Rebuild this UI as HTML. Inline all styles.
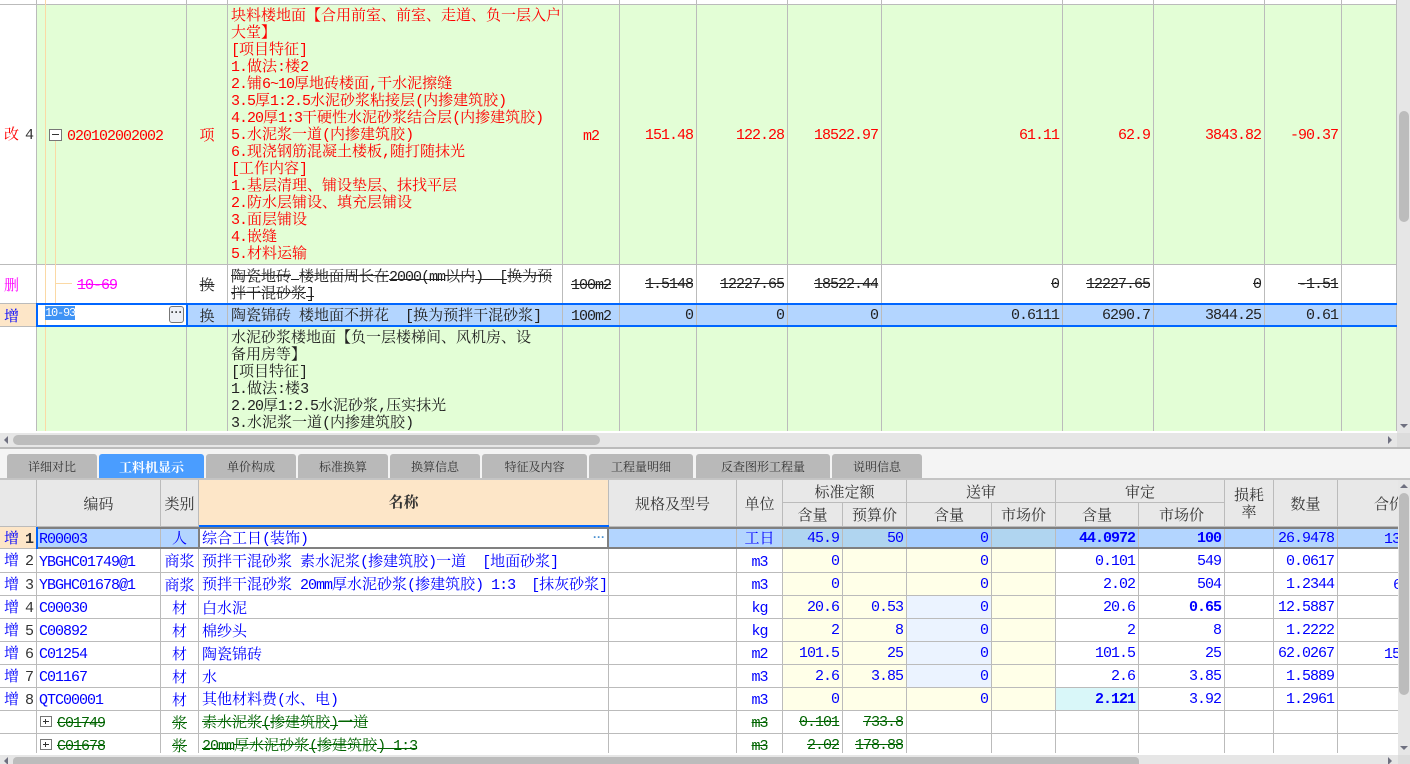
<!DOCTYPE html>
<html lang="zh">
<head>
<meta charset="utf-8">
<title>工料机显示</title>
<style>
*{box-sizing:border-box}
html,body{margin:0;padding:0;width:1410px;height:764px;overflow:hidden;background:#fff}
body{position:relative;font:15px/17px "Noto Serif CJK SC","WenQuanYi Zen Hei",serif;color:#222}
.a{position:absolute}
table{border-collapse:separate;border-spacing:0;table-layout:fixed;position:absolute;left:0}
td{border-right:1px solid #bbb;border-bottom:1px solid #bbb;padding:0 3px;white-space:nowrap;overflow:hidden;vertical-align:middle}
i,.n,.l u{font-family:"Liberation Mono",monospace;font-style:normal;font-size:15px;letter-spacing:-1px}
i{line-height:1}
.n{text-align:right;padding-top:1px}
.c{text-align:center}
.l{padding:0 0 0 4px}
.l u{text-decoration:none;margin-left:6px;color:#333}
.g{background:#e3fed6}
.s{text-decoration:line-through}
.y{background:#ffffe8}
.b{background:#ebf3ff}
.w{font-weight:bold}
#top td.d{vertical-align:top;padding:1px 0 0 3px}
.d div,.t div{height:17px}
.red td{color:#f00}
.blu td{color:#00f}
.blu td.l u{color:#333}
.grn td{color:#006400}
.tab{position:absolute;top:454px;height:24px;background:#b9b9b9;border-radius:3px 3px 0 0;text-align:center;font-size:12px;line-height:26px;color:#333}
.h{position:absolute;background:#e8e8e8;border-right:1px solid #bbb;border-bottom:1px solid #bbb;text-align:center;font-size:15px;color:#333;display:flex;align-items:center;justify-content:center;line-height:17px}
.box{position:absolute;background:#fff;border:1px solid #777}
.box:before{content:"";position:absolute;left:2px;right:2px;top:4px;height:1px;background:#333}
.box.p:after{content:"";position:absolute;top:2px;bottom:2px;left:4px;width:1px;background:#333}
</style>
</head>
<body>

<!-- upper grid -->
<div class="a" style="left:0;top:0;width:1397px;height:431px;overflow:hidden">
<table id="top" style="top:0;width:1397px">
<colgroup><col style="width:37px"><col style="width:150px"><col style="width:41px"><col style="width:335px"><col style="width:57px"><col style="width:77px"><col style="width:91px"><col style="width:94px"><col style="width:181px"><col style="width:91px"><col style="width:111px"><col style="width:77px"><col style="width:55px"></colgroup>
<tr style="height:5px"><td style="height:5px"></td><td></td><td></td><td></td><td></td><td></td><td></td><td></td><td></td><td></td><td></td><td></td><td></td></tr>
<tr class="red" style="height:260px">
<td class="l" style="height:260px">改<u>4</u></td>
<td class="g" style="padding-left:30px"><i>020102002002</i></td>
<td class="g c">项</td>
<td class="g d"><div>块料楼地面【合用前室、前室、走道、负一层入户</div><div>大堂】</div><div><i>[</i>项目特征<i>]</i></div><div><i>1.</i>做法<i>:</i>楼<i>2</i></div><div><i>2.</i>铺<i>6~10</i>厚地砖楼面<i>,</i>干水泥擦缝</div><div><i>3.5</i>厚<i>1:2.5</i>水泥砂浆粘接层<i>(</i>内掺建筑胶<i>)</i></div><div><i>4.20</i>厚<i>1:3</i>干硬性水泥砂浆结合层<i>(</i>内掺建筑胶<i>)</i></div><div><i>5.</i>水泥浆一道<i>(</i>内掺建筑胶<i>)</i></div><div><i>6.</i>现浇钢筋混凝土楼板<i>,</i>随打随抹光</div><div><i>[</i>工作内容<i>]</i></div><div><i>1.</i>基层清理、铺设垫层、抹找平层</div><div><i>2.</i>防水层铺设、填充层铺设</div><div><i>3.</i>面层铺设</div><div><i>4.</i>嵌缝</div><div><i>5.</i>材料运输</div></td>
<td class="g c"><i>m2</i></td>
<td class="g n">151.48</td><td class="g n">122.28</td><td class="g n">18522.97</td><td class="g n">61.11</td><td class="g n">62.9</td><td class="g n">3843.82</td><td class="g n">-90.37</td><td class="g"></td>
</tr>
<tr style="height:39px">
<td class="l" style="height:39px;color:#f0f">删</td>
<td style="padding-left:40px;color:#f0f"><i class="s">10-69</i></td>
<td class="c s">换</td>
<td class="t" style="padding:0 0 0 3px"><div class="s">陶瓷地砖<i>&nbsp;</i>楼地面周长在<i>2000(mm</i>以内<i>)&nbsp;&nbsp;[</i>换为预</div><div class="s">拌干混砂浆<i>]</i></div></td>
<td class="c"><i class="s">100m2</i></td>
<td class="n"><span class="s">1.5148</span></td><td class="n"><span class="s">12227.65</span></td><td class="n"><span class="s">18522.44</span></td><td class="n"><span class="s">0</span></td><td class="n"><span class="s">12227.65</span></td><td class="n"><span class="s">0</span></td><td class="n"><span class="s">-1.51</span></td><td></td>
</tr>
<tr style="height:23px;background:#b3d5ff">
<td class="l" style="height:23px;background:#fde6c8;color:#00f">增</td>
<td style="background:#fff"></td>
<td class="c">换</td>
<td style="padding:0 0 0 3px">陶瓷锦砖<i>&nbsp;</i>楼地面不拼花<i>&nbsp;&nbsp;[</i>换为预拌干混砂浆<i>]</i></td>
<td class="c"><i>100m2</i></td>
<td class="n">0</td><td class="n">0</td><td class="n">0</td><td class="n">0.6111</td><td class="n">6290.7</td><td class="n">3844.25</td><td class="n">0.61</td><td></td>
</tr>
<tr style="height:110px">
<td style="height:110px"></td><td class="g"></td><td class="g"></td>
<td class="g d"><div>水泥砂浆楼地面【负一层楼梯间、风机房、设</div><div>备用房等】</div><div><i>[</i>项目特征<i>]</i></div><div><i>1.</i>做法<i>:</i>楼<i>3</i></div><div><i>2.20</i>厚<i>1:2.5</i>水泥砂浆<i>,</i>压实抹光</div><div><i>3.</i>水泥浆一道<i>(</i>内掺建筑胶<i>)</i></div></td>
<td class="g"></td><td class="g"></td><td class="g"></td><td class="g"></td><td class="g"></td><td class="g"></td><td class="g"></td><td class="g"></td><td class="g"></td>
</tr>
</table>
<!-- tree lines -->
<div class="a" style="left:45px;top:0;width:1px;height:431px;background:#fbd9a5"></div>
<div class="a" style="left:55px;top:140px;width:1px;height:164px;background:#fbd9a5"></div>
<div class="a" style="left:56px;top:283px;width:16px;height:1px;background:#fbd9a5"></div>
<div class="box" style="left:49px;top:129px;width:13px;height:12px"></div>
<!-- selection outline -->
<div class="a" style="left:36px;top:303px;width:1361px;height:2px;background:#06f"></div>
<div class="a" style="left:36px;top:325px;width:1361px;height:2px;background:#06f"></div>
<div class="a" style="left:36px;top:303px;width:2px;height:24px;background:#06f"></div>
<div class="a" style="left:186px;top:303px;width:2px;height:24px;background:#06f"></div>
<div class="a" style="left:45px;top:306px;width:30px;height:14px;background:#3f93f5;color:#fff;font:12px/14px 'Liberation Mono',monospace;letter-spacing:-1.2px;text-align:center;white-space:nowrap">10-93</div>
<div class="a" style="left:169px;top:306px;width:15px;height:17px;background:#eef0f6;border:1px solid #777;border-radius:3px;font:bold 12px/11px 'Liberation Sans',sans-serif;color:#444;text-align:center">···</div>
</div>

<!-- upper scrollbars -->
<div class="a" style="left:1397px;top:0;width:13px;height:448px;background:#e6e6e6"></div>
<div class="a" style="left:1399px;top:111px;width:10px;height:111px;background:#bcbcbc;border-radius:5px"></div>
<div class="a" style="left:1400px;top:424px;width:0;height:0;border-left:4px solid transparent;border-right:4px solid transparent;border-top:4px solid #6f7080"></div>
<div class="a" style="left:0;top:433px;width:1410px;height:14px;background:#e6e6e6"></div>
<div class="a" style="left:13px;top:435px;width:587px;height:10px;background:#bcbcbc;border-radius:5px"></div>
<div class="a" style="left:4px;top:436px;width:0;height:0;border-top:4px solid transparent;border-bottom:4px solid transparent;border-right:4px solid #6f7080"></div>
<div class="a" style="left:1388px;top:436px;width:0;height:0;border-top:4px solid transparent;border-bottom:4px solid transparent;border-left:4px solid #6f7080"></div>
<div class="a" style="left:1397px;top:433px;width:13px;height:14px;background:#dcdcdc"></div>
<div class="a" style="left:0;top:447px;width:1410px;height:2px;background:#bbb"></div>

<!-- tabs -->
<div class="a" style="left:0;top:449px;width:1410px;height:31px;background:#f4f4f4"></div>
<div class="a" style="left:0;top:478px;width:1410px;height:2px;background:#c4c4c4"></div>
<div class="tab" style="left:7px;width:90px">详细对比</div>
<div class="tab" style="left:99px;width:105px;background:#4a9dff;color:#fff;font-size:13px;font-weight:bold">工料机显示</div>
<div class="tab" style="left:206px;width:90px">单价构成</div>
<div class="tab" style="left:298px;width:90px">标准换算</div>
<div class="tab" style="left:390px;width:90px">换算信息</div>
<div class="tab" style="left:482px;width:105px">特征及内容</div>
<div class="tab" style="left:589px;width:104px">工程量明细</div>
<div class="tab" style="left:696px;width:134px">反查图形工程量</div>
<div class="tab" style="left:832px;width:90px">说明信息</div>

<!-- lower header -->
<div class="a" style="left:0;top:480px;width:1398px;height:47px;overflow:hidden">
<div class="h" style="left:0;top:0;width:37px;height:47px"></div>
<div class="h" style="left:37px;top:0;width:124px;height:47px">编码</div>
<div class="h" style="left:161px;top:0;width:38px;height:47px">类别</div>
<div class="h" style="left:199px;top:0;width:410px;height:47px;background:#fde6c8;font-weight:bold;font-size:15px;padding-bottom:4px">名称</div>
<div class="h" style="left:609px;top:0;width:128px;height:47px">规格及型号</div>
<div class="h" style="left:737px;top:0;width:46px;height:47px">单位</div>
<div class="h" style="left:783px;top:0;width:124px;height:23px">标准定额</div>
<div class="h" style="left:907px;top:0;width:149px;height:23px">送审</div>
<div class="h" style="left:1056px;top:0;width:169px;height:23px">审定</div>
<div class="h" style="left:783px;top:23px;width:60px;height:24px">含量</div>
<div class="h" style="left:843px;top:23px;width:64px;height:24px">预算价</div>
<div class="h" style="left:907px;top:23px;width:85px;height:24px">含量</div>
<div class="h" style="left:992px;top:23px;width:64px;height:24px">市场价</div>
<div class="h" style="left:1056px;top:23px;width:83px;height:24px">含量</div>
<div class="h" style="left:1139px;top:23px;width:86px;height:24px">市场价</div>
<div class="h" style="left:1225px;top:0;width:49px;height:47px">损耗<br>率</div>
<div class="h" style="left:1274px;top:0;width:64px;height:47px">数量</div>
<div class="h" style="left:1338px;top:0;width:100px;height:47px;justify-content:flex-start;padding-left:36px">合价</div>
<div class="a" style="left:199px;top:45px;width:410px;height:2px;background:#06f"></div>
</div>

<!-- lower grid -->
<div class="a" style="left:0;top:527px;width:1398px;height:226px;overflow:hidden">
<table id="bot" style="top:0;width:1438px">
<colgroup><col style="width:37px"><col style="width:124px"><col style="width:38px"><col style="width:410px"><col style="width:128px"><col style="width:46px"><col style="width:60px"><col style="width:64px"><col style="width:85px"><col style="width:64px"><col style="width:83px"><col style="width:86px"><col style="width:49px"><col style="width:64px"><col style="width:100px"></colgroup>
<tr class="blu" style="height:22px;background:#b3d5ff">
<td class="l" style="height:22px;background:#fde6c8;padding-top:1px">增<u class="w">1</u></td>
<td style="padding-left:2px;padding-top:1px"><i>R00003</i></td><td class="c">人</td>
<td style="background:#fff;padding:0 0 0 3px">综合工日<i>(</i>装饰<i>)</i></td><td></td><td class="c">工日</td>
<td class="n" style="background:#b0d5f0">45.9</td><td class="n" style="background:#b0d5f0">50</td><td class="n" style="background:#a8cfff">0</td><td style="background:#b0d5f0"></td>
<td class="n w" style="background:#a8cfff">44.0972</td><td class="n w">100</td><td></td><td class="n">26.9478</td><td style="padding-left:46px"><i>1347.39</i></td>
</tr>
<tr class="blu"><td class="l" style="height:24px">增<u>2</u></td><td style="padding-left:2px"><i>YBGHC01749@1</i></td><td class="c">商浆</td><td>预拌干混砂浆<i>&nbsp;</i>素水泥浆<i>(</i>掺建筑胶<i>)</i>一道<i>&nbsp;&nbsp;[</i>地面砂浆<i>]</i></td><td></td><td class="c"><i>m3</i></td><td class="n y">0</td><td class="y"></td><td class="n y">0</td><td class="y"></td><td class="n">0.101</td><td class="n">549</td><td></td><td class="n">0.0617</td><td></td></tr>
<tr class="blu"><td class="l" style="height:23px">增<u>3</u></td><td style="padding-left:2px"><i>YBGHC01678@1</i></td><td class="c">商浆</td><td>预拌干混砂浆<i>&nbsp;20mm</i>厚水泥砂浆<i>(</i>掺建筑胶<i>)&nbsp;1:3&nbsp;&nbsp;[</i>抹灰砂浆<i>]</i></td><td></td><td class="c"><i>m3</i></td><td class="n y">0</td><td class="y"></td><td class="n y">0</td><td class="y"></td><td class="n">2.02</td><td class="n">504</td><td></td><td class="n">1.2344</td><td style="padding-left:55px"><i>622.14</i></td></tr>
<tr class="blu"><td class="l" style="height:23px">增<u>4</u></td><td style="padding-left:2px"><i>C00030</i></td><td class="c">材</td><td>白水泥</td><td></td><td class="c"><i>kg</i></td><td class="n y">20.6</td><td class="n y">0.53</td><td class="n b">0</td><td class="y"></td><td class="n">20.6</td><td class="n w">0.65</td><td></td><td class="n">12.5887</td><td></td></tr>
<tr class="blu"><td class="l" style="height:23px">增<u>5</u></td><td style="padding-left:2px"><i>C00892</i></td><td class="c">材</td><td>棉纱头</td><td></td><td class="c"><i>kg</i></td><td class="n y">2</td><td class="n y">8</td><td class="n b">0</td><td class="y"></td><td class="n">2</td><td class="n">8</td><td></td><td class="n">1.2222</td><td></td></tr>
<tr class="blu"><td class="l" style="height:23px">增<u>6</u></td><td style="padding-left:2px"><i>C01254</i></td><td class="c">材</td><td>陶瓷锦砖</td><td></td><td class="c"><i>m2</i></td><td class="n y">101.5</td><td class="n y">25</td><td class="n b">0</td><td class="y"></td><td class="n">101.5</td><td class="n">25</td><td></td><td class="n">62.0267</td><td style="padding-left:46px"><i>1550.67</i></td></tr>
<tr class="blu"><td class="l" style="height:23px">增<u>7</u></td><td style="padding-left:2px"><i>C01167</i></td><td class="c">材</td><td>水</td><td></td><td class="c"><i>m3</i></td><td class="n y">2.6</td><td class="n y">3.85</td><td class="n b">0</td><td class="y"></td><td class="n">2.6</td><td class="n">3.85</td><td></td><td class="n">1.5889</td><td></td></tr>
<tr class="blu"><td class="l" style="height:23px">增<u>8</u></td><td style="padding-left:2px"><i>QTC00001</i></td><td class="c">材</td><td>其他材料费<i>(</i>水、电<i>)</i></td><td></td><td class="c"><i>m3</i></td><td class="n y">0</td><td class="y"></td><td class="n y">0</td><td class="y"></td><td class="n w" style="background:#d9f7f9">2.121</td><td class="n">3.92</td><td></td><td class="n">1.2961</td><td></td></tr>
<tr class="grn"><td style="height:23px"></td><td style="padding-left:20px"><i class="s">C01749</i></td><td class="c s">浆</td><td><span class="s">素水泥浆<i>(</i>掺建筑胶<i>)</i>一道</span></td><td></td><td class="c"><i class="s">m3</i></td><td class="n"><span class="s">0.101</span></td><td class="n"><span class="s">733.8</span></td><td></td><td></td><td></td><td></td><td></td><td></td><td></td></tr>
<tr class="grn"><td style="height:23px"></td><td style="padding-left:20px"><i class="s">C01678</i></td><td class="c s">浆</td><td><span class="s"><i>20mm</i>厚水泥砂浆<i>(</i>掺建筑胶<i>)&nbsp;1:3</i></span></td><td></td><td class="c"><i class="s">m3</i></td><td class="n"><span class="s">2.02</span></td><td class="n"><span class="s">178.88</span></td><td></td><td></td><td></td><td></td><td></td><td></td><td></td></tr>
</table>
<div class="a" style="left:36px;top:0;width:1362px;height:2px;background:#808080"></div>
<div class="a" style="left:36px;top:20px;width:1362px;height:2px;background:#808080"></div>
<div class="a" style="left:36px;top:0;width:2px;height:22px;background:#06f"></div>
<div class="a" style="left:198px;top:0;width:2px;height:22px;background:#808080"></div>
<div class="a" style="left:607px;top:0;width:2px;height:22px;background:#808080"></div>
<div class="a" style="left:592px;top:2px;width:14px;height:16px;color:#4a90d0;font:bold 12px/16px 'Liberation Sans',sans-serif;text-align:center">···</div>
<div class="box p" style="left:40px;top:189px;width:12px;height:11px"></div>
<div class="box p" style="left:40px;top:212px;width:12px;height:11px"></div>
</div>

<!-- lower scrollbars -->
<div class="a" style="left:1398px;top:480px;width:12px;height:284px;background:#e6e6e6"></div>
<div class="a" style="left:1399px;top:493px;width:10px;height:202px;background:#bcbcbc;border-radius:5px"></div>
<div class="a" style="left:1400px;top:484px;width:0;height:0;border-left:4px solid transparent;border-right:4px solid transparent;border-bottom:4px solid #6f7080"></div>
<div class="a" style="left:1400px;top:746px;width:0;height:0;border-left:4px solid transparent;border-right:4px solid transparent;border-top:4px solid #6f7080"></div>
<div class="a" style="left:0;top:755px;width:1410px;height:9px;background:#e6e6e6"></div>
<div class="a" style="left:13px;top:757px;width:1126px;height:7px;background:#bcbcbc;border-radius:4px 4px 0 0"></div>
<div class="a" style="left:4px;top:757px;width:0;height:0;border-top:4px solid transparent;border-bottom:4px solid transparent;border-right:4px solid #6f7080"></div>
<div class="a" style="left:1388px;top:757px;width:0;height:0;border-top:4px solid transparent;border-bottom:4px solid transparent;border-left:4px solid #6f7080"></div>
<div class="a" style="left:1398px;top:755px;width:12px;height:9px;background:#dcdcdc"></div>
</body>
</html>
